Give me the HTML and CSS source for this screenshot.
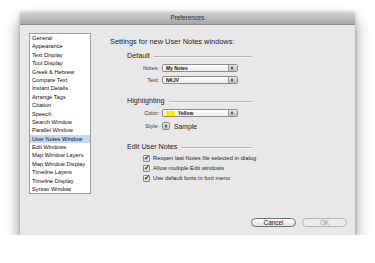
FILE: index.html
```html
<!DOCTYPE html>
<html lang="en">
<head>
  <meta charset="UTF-8">
  <title>Preferences</title>
  <link rel="stylesheet" href="styles.css">
</head>
<body>

  <div class="window">
    <div class="titlebar">Preferences</div>

    <div class="content">
      <ul class="sidebar">
        <li>General</li>
        <li>Appearance</li>
        <li>Text Display</li>
        <li>Tool Display</li>
        <li>Greek &amp; Hebrew</li>
        <li>Compare Text</li>
        <li>Instant Details</li>
        <li>Arrange Tags</li>
        <li>Citation</li>
        <li>Speech</li>
        <li>Search Window</li>
        <li>Parallel Window</li>
        <li class="selected">User Notes Window</li>
        <li>Edit Windows</li>
        <li>Map Window Layers</li>
        <li>Map Window Display</li>
        <li>Timeline Layers</li>
        <li>Timeline Display</li>
        <li>Syntax Window</li>
      </ul>

      <div class="panel">
        <div class="heading">Settings for new User Notes windows:</div>

        <div class="group-title"><span>Default</span><div class="rule"></div></div>
        <div class="field">
          <label>Notes:</label>
          <div class="popup"><span>My Notes</span><i class="arrows"></i></div>
        </div>
        <div class="field">
          <label>Text:</label>
          <div class="popup"><span>NKJV</span><i class="arrows"></i></div>
        </div>

        <div class="group-title second"><span>Highlighting</span><div class="rule"></div></div>
        <div class="field">
          <label>Color:</label>
          <div class="popup"><b class="swatch"></b><span>Yellow</span><i class="arrows"></i></div>
        </div>
        <div class="field style-field">
          <label>Style:</label>
          <div class="stepper"><i class="arrows"></i></div>
          <span class="sample">Sample</span>
        </div>

        <div class="group-title third"><span>Edit User Notes</span><div class="rule"></div></div>
        <div class="check"><i class="box">&#10004;</i>Reopen last Notes file selected in dialog</div>
        <div class="check"><i class="box">&#10004;</i>Allow multiple Edit windows</div>
        <div class="check"><i class="box">&#10004;</i>Use default fonts in font menu</div>
      </div>
    </div>

    <div class="buttons">
      <button class="btn">Cancel</button>
      <button class="btn disabled">OK</button>
    </div>
  </div>

</body>
</html>
```

FILE: styles.css
```css
body {
  margin: 0;
  padding: 12px 0 0 20px;
  background: #ffffff;
  font-family: "Liberation Sans", Arial, sans-serif;
  color: #222;
}

.window {
  width: 335px;
  height: 223px;
  background: #e8e8e8;
  box-shadow: 0 9px 14px rgba(0, 0, 0, 0.45), 0 0 4px rgba(0, 0, 0, 0.2);
  display: flex;
  flex-direction: column;
}

.titlebar {
  height: 13px;
  line-height: 12px;
  background: linear-gradient(#d4d4d4, #a7a7a7);
  border-bottom: 1px solid #878787;
  text-align: center;
  font-size: 6.3px;
  color: #2e2e2e;
  box-sizing: border-box;
}

.content {
  display: flex;
  padding: 8px 0 0 9px;
  flex: 1;
}

.sidebar {
  list-style: none;
  margin: 0;
  padding: 0;
  width: 62px;
  height: 161px;
  box-sizing: border-box;
  background: #fff;
  border: 1px solid #9a9a9a;
}

.sidebar li {
  height: 8.4px;
  line-height: 8.4px;
  font-size: 5.7px;
  padding-left: 2px;
  white-space: nowrap;
  color: #0d0d0d;
}

.sidebar li.selected {
  background: #c4d8f2;
}

.panel {
  padding-left: 19px;
}

.heading {
  font-size: 7.4px;
  height: 10px;
  line-height: 10px;
  margin-top: 4px;
  color: #222;
}

.group-title {
  display: flex;
  align-items: center;
  padding-left: 17px;
  margin-top: 4px;
  height: 9px;
  font-size: 7.2px;
  width: 125px;
}

.group-title.second,
.group-title.third {
  margin-top: 12px;
}

.rule {
  flex: 1;
  margin-left: 4px;
  margin-top: 2px;
  height: 1px;
  background: #b4b4b4;
  border-bottom: 1px solid #f6f6f6;
}

.field {
  display: flex;
  align-items: center;
  height: 8px;
  margin-top: 4px;
}

.field label {
  width: 49px;
  text-align: right;
  padding-right: 3px;
  font-size: 5.5px;
  color: #333;
}

.popup {
  position: relative;
  width: 76px;
  height: 8px;
  box-sizing: border-box;
  border: 1px solid #8c8c8c;
  border-radius: 2px;
  background: linear-gradient(#ffffff, #ececec);
  display: flex;
  align-items: center;
  padding-left: 3px;
  font-size: 4.9px;
  font-weight: bold;
  color: #111;
}

.popup .arrows {
  position: absolute;
  right: 0;
  top: 0;
  bottom: 0;
  width: 8px;
}

.arrows {
  background: linear-gradient(#e8e8e8, #bdbdbd);
  border-left: 1px solid #9a9a9a;
}

.arrows::before,
.arrows::after {
  content: "";
  position: absolute;
  left: 2px;
  border-left: 1.5px solid transparent;
  border-right: 1.5px solid transparent;
}

.arrows::before {
  top: 1px;
  border-bottom: 2px solid #333;
}

.arrows::after {
  bottom: 1px;
  border-top: 2px solid #333;
}

.swatch {
  width: 9px;
  height: 5px;
  background: #f5f000;
  margin-right: 3px;
  border-radius: 1px;
}

.style-field {
  margin-top: 5px;
}

.stepper {
  position: relative;
  width: 8px;
  height: 8px;
  box-sizing: border-box;
  border: 1px solid #8c8c8c;
  border-radius: 2px;
  overflow: hidden;
}

.stepper .arrows {
  position: absolute;
  inset: 0;
  border-left: none;
}

.sample {
  margin-left: 4px;
  font-size: 6.8px;
  color: #222;
}

.check {
  display: flex;
  align-items: center;
  height: 10px;
  padding-left: 33px;
  font-size: 5.8px;
  color: #222;
}

.group-title.third + .check {
  margin-top: 2px;
}

.box {
  width: 7px;
  height: 7px;
  box-sizing: border-box;
  margin-right: 3px;
  border: 1px solid #8a8a8a;
  border-radius: 1px;
  background: linear-gradient(#ffffff, #d8d8d8);
  font-style: normal;
  font-family: "DejaVu Sans", sans-serif;
  font-size: 7px;
  line-height: 5px;
  color: #2a2a2a;
}

.buttons {
  display: flex;
  justify-content: flex-end;
  gap: 6px;
  padding: 0 8px 8px 0;
}

.btn {
  width: 45px;
  height: 9px;
  padding: 0;
  border: 1px solid #6e6e6e;
  border-radius: 5px;
  background: linear-gradient(#ffffff, #e2e2e2);
  font-family: "Liberation Sans", Arial, sans-serif;
  font-size: 6.4px;
  line-height: 7px;
  color: #111;
}

.btn.disabled {
  border-color: #b4b4b4;
  color: #9a9a9a;
  background: #ececec;
}
```
